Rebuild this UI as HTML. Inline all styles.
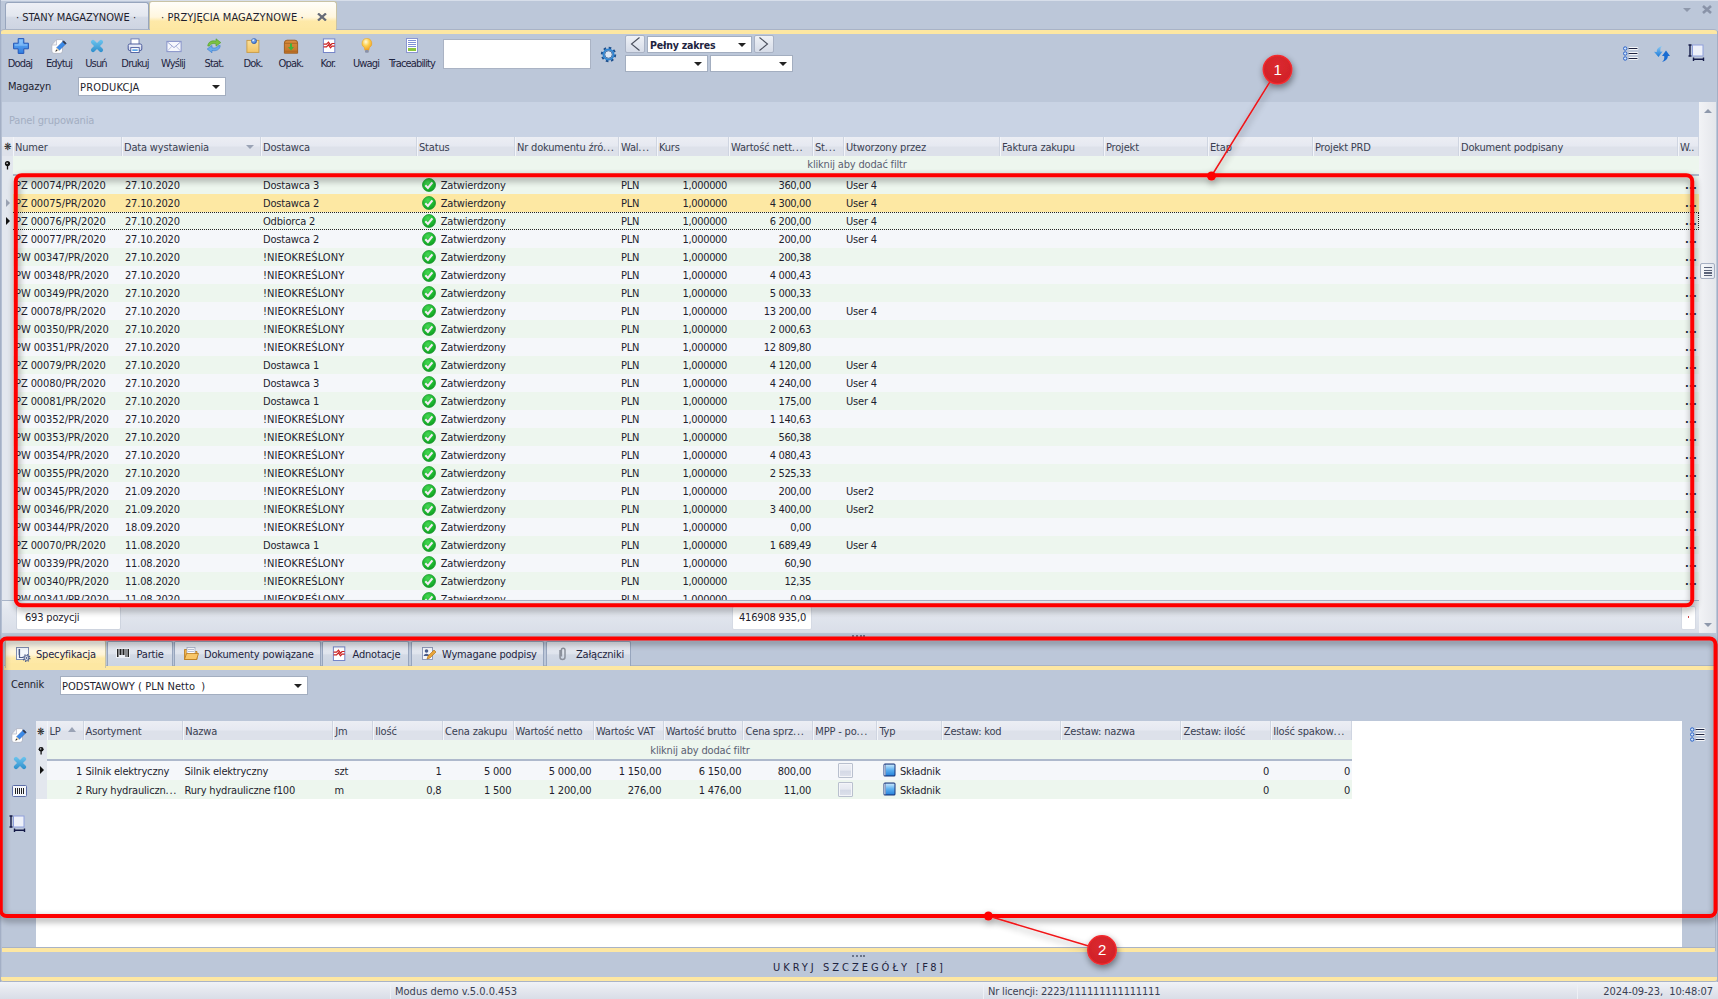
<!DOCTYPE html><html lang="pl"><head><meta charset="utf-8"><title>Przyjęcia magazynowe</title><style>
*{box-sizing:border-box;margin:0;padding:0}
html,body{width:1718px;height:999px;overflow:hidden;background:#bcc7d9}
body{font-family:"DejaVu Sans Condensed","Liberation Sans",sans-serif;font-size:11px;color:#1e1e2e;position:relative;letter-spacing:-0.18px}
.uc{letter-spacing:0.05px}
.num{letter-spacing:-0.35px}
.el{font-style:normal;letter-spacing:0.7px}
.abs{position:absolute}
.t{position:absolute;white-space:nowrap;line-height:14px;height:15px;padding-top:1px}
.hdr{position:absolute;top:137px;height:19px;background:linear-gradient(#eceef4 0,#e6e9f1 45%,#dde1ea 55%,#dde1ea 100%);border-left:1px solid #f3f5f9;border-right:1px solid #cfd5e1;color:#3a3f52}
.hdr span,.dh span{position:absolute;left:1px;top:4px;line-height:14px;white-space:nowrap}
.dh{position:absolute;top:721px;height:19px;background:linear-gradient(#eceef4 0,#e6e9f1 45%,#dde1ea 55%,#dde1ea 100%);border-left:1px solid #f3f5f9;border-right:1px solid #cfd5e1;color:#3a3f52}
.row{position:absolute;left:13px;width:1686px;height:18px}
.row .t{top:2px}
.g{background:#edf6ee}
.w{background:#f5f7fa}
.sel{background:#fde8a3}
.combo{position:absolute;background:#fff;border:1px solid #a3aec0;}
.arr{position:absolute;width:0;height:0;border-left:4px solid transparent;border-right:4px solid transparent;border-top:4px solid #222}
.tbl{position:absolute;top:58px;line-height:12px;font-size:11px;letter-spacing:-0.85px;color:#1e2440;white-space:nowrap;text-align:center}
.ic{position:absolute}
</style></head><body>
<div class="abs" style="left:0;top:0;width:1718px;height:1px;background:#d7deea"></div>
<div class="abs" style="left:0;top:0;width:1px;height:982px;background:#a3afc5"></div><div class="abs" style="left:1px;top:34px;width:1px;height:948px;background:#b4bfd2"></div>
<div class="abs" style="left:5px;top:2px;width:144px;height:28px;border:1px solid #97a5bd;border-bottom:none;border-radius:3px 3px 0 0;background:linear-gradient(#eef0f6 0,#e3e7ef 48%,#d4dae6 54%,#cdd4e2 100%)"></div>
<div class="t" style="left:16px;top:10px;font-size:11px;letter-spacing:-0.05px">· STANY MAGAZYNOWE ·</div>
<div class="abs" style="left:149px;top:1px;width:188px;height:30px;border:1px solid #c9c3a5;border-bottom:none;border-radius:3px 3px 0 0;background:linear-gradient(#fffefa 0,#fff6de 52%,#fee9a8 66%,#fde7a2 100%)"></div>
<div class="t" style="left:161px;top:10px;font-size:11px;letter-spacing:0.08px">· PRZYJĘCIA MAGAZYNOWE ·</div>
<svg class="ic" style="left:316.500px;top:12.500px" width="10" height="8" viewBox="0 0 10 8"><path d="M1 0.500L9 7.500M9 0.500L1 7.500" stroke="#666b78" stroke-width="2.300"/></svg>
<div class="abs" style="left:1px;top:29px;width:1716px;height:5px;background:#fde7a2;border-top:1px solid #a9b3c6;border-radius:3px 3px 0 0"></div>
<div class="abs" style="left:150px;top:28px;width:186px;height:4px;background:#fde7a2"></div>
<div class="abs" style="left:1683px;top:8px;width:0;height:0;border-left:4px solid transparent;border-right:4px solid transparent;border-top:4px solid #8e98ab"></div>
<svg class="ic" style="left:1702px;top:5px" width="10" height="9" viewBox="0 0 10 9"><path d="M1 1L9 8M9 1L1 8" stroke="#8993a8" stroke-width="2.600"/></svg>
<svg width="0" height="0" style="position:absolute"><defs><linearGradient id="gAdd" x1="0" y1="0" x2="0" y2="1"><stop offset="0" stop-color="#6db3f7"/><stop offset="1" stop-color="#2f7de0"/></linearGradient><linearGradient id="gDel" gradientUnits="userSpaceOnUse" x1="0" y1="2" x2="0" y2="14"><stop offset="0" stop-color="#6cc4ee"/><stop offset="1" stop-color="#2f8fcc"/></linearGradient><linearGradient id="gPr" x1="0" y1="0" x2="0" y2="1"><stop offset="0" stop-color="#f2f4fb"/><stop offset="1" stop-color="#c8d0ea"/></linearGradient><linearGradient id="gDok" x1="0" y1="0" x2="0" y2="1"><stop offset="0" stop-color="#fbe09a"/><stop offset="1" stop-color="#f2c465"/></linearGradient><radialGradient id="gPin" cx="0.35" cy="0.3" r="0.8"><stop offset="0" stop-color="#a8d0ff"/><stop offset="1" stop-color="#2a62c8"/></radialGradient><linearGradient id="gOp" x1="0" y1="0" x2="0" y2="1"><stop offset="0" stop-color="#d98c3c"/><stop offset="1" stop-color="#c47428"/></linearGradient><radialGradient id="gBulb" cx="0.4" cy="0.3" r="0.75"><stop offset="0" stop-color="#fffbe0"/><stop offset="0.45" stop-color="#fdd050"/><stop offset="1" stop-color="#f09a1c"/></radialGradient><radialGradient id="gChk" cx="0.42" cy="0.3" r="0.75"><stop offset="0" stop-color="#46d654"/><stop offset="0.6" stop-color="#1db82f"/><stop offset="1" stop-color="#109a22"/></radialGradient><linearGradient id="gBook" x1="0" y1="0" x2="0" y2="1"><stop offset="0" stop-color="#c6e6fb"/><stop offset="0.5" stop-color="#5cb0f0"/><stop offset="1" stop-color="#2a84dc"/></linearGradient></defs></svg>
<svg class="ic" style="left:12.75px;top:38px" width="16" height="16" viewBox="0 0 16 16"><path d="M5.200 0.600h5.600v4.600h4.600v5.600h-4.600v4.600h-5.600v-4.600h-4.600v-5.600h4.600z" fill="url(#gAdd)" stroke="#2457b8" stroke-width="1" stroke-linejoin="round"/><path d="M6.200 1.700h3.600v4.500h4.500v1.600h-12.600v-1.600h4.500z" fill="#9fd0ff" opacity="0.55"/></svg>
<div class="tbl" style="left:-20px;width:80px">Dodaj</div>
<svg class="ic" style="left:51px;top:38px" width="16" height="16" viewBox="0 0 16 16"><path d="M0.800 7L5.500 1.600H11.500V13Q11.500 15.400 9 15.400H3Q0.800 15.400 0.800 13Z" fill="#ffffff" stroke="#b0b5c4" stroke-width="0.900"/><path d="M0.800 7H5.500V1.600Z" fill="#f3f4f8" stroke="#b0b5c4" stroke-width="0.700" stroke-linejoin="round"/><polygon points="12.700,2.700 15.300,5.300 8.300,12.300 5.700,9.700" fill="#3a8ae8" stroke="#2560b8" stroke-width="0.600"/><polygon points="12.700,2.700 15.300,5.300 14.200,6.400 11.600,3.800" fill="#3a3a44"/><polygon points="5.700,9.700 8.300,12.300 4.300,13.700" fill="#ead9b6"/><polygon points="5.200,11.500 6.500,12.800 4.300,13.700" fill="#30303a"/></svg>
<div class="tbl" style="left:19px;width:80px">Edytuj</div>
<svg class="ic" style="left:89px;top:38px" width="16" height="16" viewBox="0 0 16 16"><path d="M4 4L12 12M12 4L4 12" stroke="url(#gDel)" stroke-width="4.200" stroke-linecap="round"/></svg>
<div class="tbl" style="left:56px;width:80px">Usuń</div>
<svg class="ic" style="left:127px;top:38px" width="16" height="16" viewBox="0 0 16 16"><rect x="4" y="0.900" width="8" height="6" fill="#ffffff" stroke="#6a78b0" stroke-width="0.900"/><rect x="1.200" y="6" width="13.600" height="6.600" rx="1.600" fill="url(#gPr)" stroke="#4a5a9c" stroke-width="1"/><rect x="3.800" y="9.600" width="8.400" height="4.900" fill="#ffffff" stroke="#4a5a9c" stroke-width="0.900"/><rect x="5.300" y="11.300" width="5.400" height="1.700" fill="#5aa6ea"/></svg>
<div class="tbl" style="left:95px;width:80px">Drukuj</div>
<svg class="ic" style="left:165.5px;top:38px" width="16" height="16" viewBox="0 0 16 16"><rect x="0.900" y="3.400" width="14.200" height="10.200" fill="#f6f8fd" stroke="#8792c8" stroke-width="1"/><path d="M1.200 3.800L8 9.600L14.800 3.800" fill="none" stroke="#8f9acc" stroke-width="0.900"/><path d="M1.200 13.200L6 8.200M14.800 13.200L10 8.200" fill="none" stroke="#aab2d8" stroke-width="0.800"/></svg>
<div class="tbl" style="left:133px;width:80px">Wyślij</div>
<svg class="ic" style="left:205.5px;top:38px" width="16" height="16" viewBox="0 0 16 16"><path d="M1.800 8C2 4 6 2 10 3.200L10 0.800L14.800 4.600L10 8.200L10 5.800C7 5.100 4.500 5.700 3.600 8Z" fill="#7cc242" stroke="#4a9a28" stroke-width="0.600"/><path transform="rotate(180 8 7.800)" d="M1.800 8C2 4 6 2 10 3.200L10 0.800L14.800 4.600L10 8.200L10 5.800C7 5.100 4.500 5.700 3.600 8Z" fill="#6aabec" stroke="#3a7acc" stroke-width="0.600"/></svg>
<div class="tbl" style="left:174px;width:80px">Stat.</div>
<svg class="ic" style="left:244.5px;top:38px" width="16" height="16" viewBox="0 0 16 16"><rect x="1.900" y="2.400" width="12" height="12" fill="url(#gDok)" stroke="#c99a44" stroke-width="0.900"/><circle cx="9" cy="3.100" r="2.600" fill="url(#gPin)" stroke="#1e4aa0" stroke-width="0.500"/><circle cx="8.200" cy="2.300" r="0.800" fill="#fff" opacity="0.9"/></svg>
<div class="tbl" style="left:213px;width:80px">Dok.</div>
<svg class="ic" style="left:283px;top:38px" width="16" height="16" viewBox="0 0 16 16"><path d="M1.400 5Q1.400 2.200 4 2.200H12Q14.600 2.200 14.600 5V15.200H1.400Z" fill="url(#gOp)" stroke="#9a5a1c" stroke-width="0.900"/><path d="M1.400 5.300H14.600M1.400 13.200H14.600" stroke="#a4621f" stroke-width="0.800"/><path d="M8 5.600V10" stroke="#3cb43c" stroke-width="2"/><path d="M5 9H11L8 12.600Z" fill="#3cb43c"/></svg>
<div class="tbl" style="left:251px;width:80px">Opak.</div>
<svg class="ic" style="left:321px;top:38px" width="16" height="16" viewBox="0 0 16 16"><rect x="2.400" y="0.900" width="11.400" height="13.600" fill="#ffffff" stroke="#7585c8" stroke-width="1"/><path d="M2.500 6.200H5.500L7.500 4.200L9.500 7.200L11 5.500H13.700M2.500 8.800H5.500L7.500 6.800L9.500 9.800L11 8.100H13.700" fill="none" stroke="#cc2222" stroke-width="1.200"/></svg>
<div class="tbl" style="left:288px;width:80px">Kor.</div>
<svg class="ic" style="left:359px;top:38px" width="16" height="16" viewBox="0 0 16 16"><path d="M7.900 0.300a5 5 0 0 0-2.700 9.200Q5.800 11 5.800 12.200H10Q10 11 10.600 9.500A5 5 0 0 0 7.900 0.300Z" fill="url(#gBulb)" stroke="#e0a030" stroke-width="0.500"/><rect x="6" y="12" width="3.800" height="2.800" rx="1" fill="#8a92a8"/></svg>
<div class="tbl" style="left:326px;width:80px">Uwagi</div>
<svg class="ic" style="left:404px;top:38px" width="16" height="16" viewBox="0 0 16 16"><rect x="2.500" y="0.500" width="11" height="14" fill="#ffffff" stroke="#8a96d0" stroke-width="1"/><path d="M4 2.500h8M4 4.500h8M4 6.500h8M4 8.500h8" stroke="#7f90d4" stroke-width="1"/><rect x="4" y="10" width="8" height="3" fill="#8cc63f"/></svg>
<div class="tbl" style="left:372px;width:80px">Traceability</div>
<div class="combo" style="left:443px;top:39px;width:148px;height:30px;border-color:#aab3c4"></div>
<svg class="ic" style="left:599.500px;top:45.500px" width="17" height="17" viewBox="0 0 17 17"><circle cx="8.500" cy="8.500" r="6.700" fill="none" stroke="#1d4f8c" stroke-width="2" stroke-dasharray="2.630 2.630"/><circle cx="8.500" cy="8.500" r="5" fill="none" stroke="#2f86d4" stroke-width="2"/><circle cx="8.500" cy="8.500" r="3.700" fill="#dfe8f4" stroke="#1d4f8c" stroke-width="0.700"/></svg>
<div class="abs" style="left:625px;top:35px;width:20px;height:18px;border:1px solid #a9b2c4;border-radius:2px;background:linear-gradient(#eef1f6,#d6dce8)"></div>
<svg class="ic" style="left:629px;top:37px" width="12" height="14" viewBox="0 0 12 14"><path d="M10.500 0.500L2.500 7l8 6.500" fill="none" stroke="#4a4f5c" stroke-width="1.100"/></svg>
<div class="combo" style="left:647px;top:36px;width:105px;height:17px"></div>
<div class="t" style="left:650px;top:37px;font-weight:bold;font-size:10.500px;letter-spacing:-0.2px;color:#1e2440">Pełny zakres</div>
<div class="arr" style="left:738px;top:43px"></div>
<div class="abs" style="left:754px;top:35px;width:20px;height:18px;border:1px solid #a9b2c4;border-radius:2px;background:linear-gradient(#eef1f6,#d6dce8)"></div>
<svg class="ic" style="left:758px;top:37px" width="12" height="14" viewBox="0 0 12 14"><path d="M1.500 0.500L9.500 7l-8 6.500" fill="none" stroke="#4a4f5c" stroke-width="1.100"/></svg>
<div class="combo" style="left:625px;top:55px;width:83px;height:17px"></div><div class="arr" style="left:694px;top:62px"></div>
<div class="combo" style="left:710px;top:55px;width:83px;height:17px"></div><div class="arr" style="left:779px;top:62px"></div>
<svg class="ic" style="left:1623px;top:46px" width="16" height="15" viewBox="0 0 16 15"><path d="M7 2.500h7M7 7.500h7M7 12.500h7" stroke="#ffffff" stroke-width="2.800" stroke-linecap="round" opacity="0.85"/><path d="M6 2.500h8M6 7.500h8M6 12.500h8" stroke="#1e2440" stroke-width="1.200" stroke-linecap="round"/><circle cx="2.200" cy="2.5" r="1.700" fill="#cfe4fb" stroke="#2b62c8" stroke-width="1"/><circle cx="2.200" cy="7.5" r="1.700" fill="#cfe4fb" stroke="#2b62c8" stroke-width="1"/><circle cx="2.200" cy="12.5" r="1.700" fill="#cfe4fb" stroke="#2b62c8" stroke-width="1"/></svg>
<svg class="ic" style="left:1653px;top:45px" width="18" height="18" viewBox="0 0 18 18"><defs><linearGradient id="gRf" x1="0" y1="0" x2="0" y2="1"><stop offset="0" stop-color="#8ccaf4"/><stop offset="1" stop-color="#1878d8"/></linearGradient></defs><path d="M9 1C5 2 3.500 4.500 3.800 7L1 6.800L5.500 12L9.600 6.600L7.500 6.800C7 4.500 7.500 2.500 9 1Z" fill="url(#gRf)"/><path d="M9 11L13 5.500L17 11L14.800 11C15 13.500 13 16 9 17C11 15.500 11.500 13.500 11.200 11Z" fill="#1a6cd2"/></svg>
<svg class="ic" style="left:1688px;top:43.8px" width="17" height="18" viewBox="0 0 17 18"><rect x="4.500" y="1" width="10.500" height="11" fill="#eef1fa" stroke="#8fa0dc" stroke-width="1"/><path d="M2 1V12M0.500 1h3M0.500 12h3M5.500 15.300H15.500M5.500 13.500v3.600M15.500 13.500v3.600" stroke="#141a48" stroke-width="1.400" fill="none"/></svg>
<div class="t" style="left:8px;top:79px;font-size:11px">Magazyn</div>
<div class="combo" style="left:78px;top:77px;width:148px;height:19px"></div>
<div class="t uc" style="left:80px;top:80px;letter-spacing:0.2px">PRODUKCJA</div><div class="arr" style="left:212px;top:85px"></div>
<div class="abs" style="left:2px;top:102px;width:1697px;height:36px;background:#c9d3e4;border-bottom:1px solid #a7b2c6"></div>
<div class="t" style="left:9px;top:113px;color:#a3aec2;font-size:11px">Panel grupowania</div>
<div class="abs" style="left:1699px;top:102px;width:17px;height:531px;background:linear-gradient(90deg,#f2f3f6,#e4e6eb)"></div>
<div class="abs" style="left:1704px;top:109px;width:0;height:0;border-left:4px solid transparent;border-right:4px solid transparent;border-bottom:4px solid #8e98ab"></div>
<div class="abs" style="left:1704px;top:623px;width:0;height:0;border-left:4px solid transparent;border-right:4px solid transparent;border-top:4px solid #8e98ab"></div>
<div class="abs" style="left:1700px;top:263px;width:15px;height:16px;border:1px solid #a7b0c3;border-radius:2px;background:linear-gradient(90deg,#f8f9fb,#e3e7ef)"></div>
<div class="abs" style="left:1703.500px;top:266.500px;width:8px;height:9.500px;background:repeating-linear-gradient(#5a6278 0,#5a6278 1.500px,transparent 1.500px,transparent 2.600px)"></div>
<div class="hdr" style="left:2px;width:11px;border:none"></div>
<div class="t" style="left:4px;top:139px;font-size:10px;color:#222">❋</div>
<div class="hdr" style="left:13px;width:109px"><span>Numer</span></div>
<div class="hdr" style="left:122px;width:139px"><span>Data wystawienia</span></div>
<div class="hdr" style="left:261px;width:156px"><span>Dostawca</span></div>
<div class="hdr" style="left:417px;width:98px"><span>Status</span></div>
<div class="hdr" style="left:515px;width:104px"><span>Nr dokumentu źró<i class="el">...</i></span></div>
<div class="hdr" style="left:619px;width:38px"><span>Wal<i class="el">...</i></span></div>
<div class="hdr" style="left:657px;width:72px"><span>Kurs</span></div>
<div class="hdr" style="left:729px;width:84px"><span>Wartość nett<i class="el">...</i></span></div>
<div class="hdr" style="left:813px;width:31px"><span>St<i class="el">...</i></span></div>
<div class="hdr" style="left:844px;width:156px"><span>Utworzony przez</span></div>
<div class="hdr" style="left:1000px;width:104px"><span>Faktura zakupu</span></div>
<div class="hdr" style="left:1104px;width:104px"><span>Projekt</span></div>
<div class="hdr" style="left:1208px;width:105px"><span>Etap</span></div>
<div class="hdr" style="left:1313px;width:146px"><span>Projekt PRD</span></div>
<div class="hdr" style="left:1459px;width:219px"><span>Dokument podpisany</span></div>
<div class="hdr" style="left:1678px;width:21px"><span>W..</span></div>
<div class="abs" style="left:246px;top:145px;width:0;height:0;border-left:4px solid transparent;border-right:4px solid transparent;border-top:4px solid #9aa3b5"></div>
<div class="abs" style="left:2px;top:156px;width:11px;height:20px;background:#e3e7ee"></div>
<div class="abs" style="left:13px;top:156px;width:1686px;height:18px;background:#edf6ee"></div>
<div class="abs" style="left:13px;top:174px;width:1686px;height:2px;background:#aeb9cc"></div>
<svg class="ic" style="left:4px;top:161px" width="7" height="9" viewBox="0 0 7 9"><circle cx="3.500" cy="2.600" r="2.600" fill="#111"/><circle cx="3.100" cy="2.200" r="0.800" fill="#fff"/><path d="M3.500 4v4.500" stroke="#111" stroke-width="1.300"/></svg>
<div class="t" style="left:807px;top:157px;color:#5a6072;width:100px;text-align:center">kliknij aby dodać filtr</div>
<div class="abs" style="left:2px;top:176px;width:11px;height:424px;background:#e3e7ee"></div>
<div class="abs" style="left:3px;top:176px;width:1696px;height:424px;overflow:hidden">
<div class="row g" style="left:10px;top:0px">
<div class="t" style="left:2px;letter-spacing:-0.08px">PZ 00074/PR/2020</div><div class="t" style="left:112px">27.10.2020</div><div class="t" style="left:250px">Dostawca 3</div><svg class="ic" style="left:409px;top:1.700px" width="14" height="14" viewBox="0 0 14 14"><circle cx="7" cy="7" r="6.500" fill="url(#gChk)" stroke="#0f8f22" stroke-width="0.700"/><path d="M3.300 7.300l2.600 2.700 4.500-5.700" fill="none" stroke="#f6ecf6" stroke-width="2.100"/></svg><div class="t" style="left:427.700px">Zatwierdzony</div><div class="t" style="left:608px">PLN</div><div class="t num" style="left:644px;width:70px;text-align:right">1,000000</div><div class="t num" style="left:718px;width:80px;text-align:right">360,00</div>
<div class="t" style="left:833px">User 4</div>
<div class="t" style="left:1672px;top:2px;font-weight:bold;letter-spacing:0.250px;color:#1a1f3a">...</div>
</div>
<div class="row sel" style="left:10px;top:18px">
<div class="t" style="left:2px;letter-spacing:-0.08px">PZ 00075/PR/2020</div><div class="t" style="left:112px">27.10.2020</div><div class="t" style="left:250px">Dostawca 2</div><svg class="ic" style="left:409px;top:1.700px" width="14" height="14" viewBox="0 0 14 14"><circle cx="7" cy="7" r="6.500" fill="url(#gChk)" stroke="#0f8f22" stroke-width="0.700"/><path d="M3.300 7.300l2.600 2.700 4.500-5.700" fill="none" stroke="#f6ecf6" stroke-width="2.100"/></svg><div class="t" style="left:427.700px">Zatwierdzony</div><div class="t" style="left:608px">PLN</div><div class="t num" style="left:644px;width:70px;text-align:right">1,000000</div><div class="t num" style="left:718px;width:80px;text-align:right">4 300,00</div>
<div class="t" style="left:833px">User 4</div>
<div class="t" style="left:1672px;top:2px;font-weight:bold;letter-spacing:0.250px;color:#1a1f3a">...</div>
</div>
<div class="row g" style="left:10px;top:36px">
<div class="t" style="left:2px;letter-spacing:-0.08px">PZ 00076/PR/2020</div><div class="t" style="left:112px">27.10.2020</div><div class="t" style="left:250px">Odbiorca 2</div><svg class="ic" style="left:409px;top:1.700px" width="14" height="14" viewBox="0 0 14 14"><circle cx="7" cy="7" r="6.500" fill="url(#gChk)" stroke="#0f8f22" stroke-width="0.700"/><path d="M3.300 7.300l2.600 2.700 4.500-5.700" fill="none" stroke="#f6ecf6" stroke-width="2.100"/></svg><div class="t" style="left:427.700px">Zatwierdzony</div><div class="t" style="left:608px">PLN</div><div class="t num" style="left:644px;width:70px;text-align:right">1,000000</div><div class="t num" style="left:718px;width:80px;text-align:right">6 200,00</div>
<div class="t" style="left:833px">User 4</div>
<div class="t" style="left:1672px;top:2px;font-weight:bold;letter-spacing:0.250px;color:#1a1f3a">...</div>
</div>
<div class="row w" style="left:10px;top:54px">
<div class="t" style="left:2px;letter-spacing:-0.08px">PZ 00077/PR/2020</div><div class="t" style="left:112px">27.10.2020</div><div class="t" style="left:250px">Dostawca 2</div><svg class="ic" style="left:409px;top:1.700px" width="14" height="14" viewBox="0 0 14 14"><circle cx="7" cy="7" r="6.500" fill="url(#gChk)" stroke="#0f8f22" stroke-width="0.700"/><path d="M3.300 7.300l2.600 2.700 4.500-5.700" fill="none" stroke="#f6ecf6" stroke-width="2.100"/></svg><div class="t" style="left:427.700px">Zatwierdzony</div><div class="t" style="left:608px">PLN</div><div class="t num" style="left:644px;width:70px;text-align:right">1,000000</div><div class="t num" style="left:718px;width:80px;text-align:right">200,00</div>
<div class="t" style="left:833px">User 4</div>
<div class="t" style="left:1672px;top:2px;font-weight:bold;letter-spacing:0.250px;color:#1a1f3a">...</div>
</div>
<div class="row g" style="left:10px;top:72px">
<div class="t" style="left:2px;letter-spacing:-0.08px">PW 00347/PR/2020</div><div class="t" style="left:112px">27.10.2020</div><div class="t uc" style="left:250px">!NIEOKREŚLONY</div><svg class="ic" style="left:409px;top:1.700px" width="14" height="14" viewBox="0 0 14 14"><circle cx="7" cy="7" r="6.500" fill="url(#gChk)" stroke="#0f8f22" stroke-width="0.700"/><path d="M3.300 7.300l2.600 2.700 4.500-5.700" fill="none" stroke="#f6ecf6" stroke-width="2.100"/></svg><div class="t" style="left:427.700px">Zatwierdzony</div><div class="t" style="left:608px">PLN</div><div class="t num" style="left:644px;width:70px;text-align:right">1,000000</div><div class="t num" style="left:718px;width:80px;text-align:right">200,38</div>
<div class="t" style="left:1672px;top:2px;font-weight:bold;letter-spacing:0.250px;color:#1a1f3a">...</div>
</div>
<div class="row w" style="left:10px;top:90px">
<div class="t" style="left:2px;letter-spacing:-0.08px">PW 00348/PR/2020</div><div class="t" style="left:112px">27.10.2020</div><div class="t uc" style="left:250px">!NIEOKREŚLONY</div><svg class="ic" style="left:409px;top:1.700px" width="14" height="14" viewBox="0 0 14 14"><circle cx="7" cy="7" r="6.500" fill="url(#gChk)" stroke="#0f8f22" stroke-width="0.700"/><path d="M3.300 7.300l2.600 2.700 4.500-5.700" fill="none" stroke="#f6ecf6" stroke-width="2.100"/></svg><div class="t" style="left:427.700px">Zatwierdzony</div><div class="t" style="left:608px">PLN</div><div class="t num" style="left:644px;width:70px;text-align:right">1,000000</div><div class="t num" style="left:718px;width:80px;text-align:right">4 000,43</div>
<div class="t" style="left:1672px;top:2px;font-weight:bold;letter-spacing:0.250px;color:#1a1f3a">...</div>
</div>
<div class="row g" style="left:10px;top:108px">
<div class="t" style="left:2px;letter-spacing:-0.08px">PW 00349/PR/2020</div><div class="t" style="left:112px">27.10.2020</div><div class="t uc" style="left:250px">!NIEOKREŚLONY</div><svg class="ic" style="left:409px;top:1.700px" width="14" height="14" viewBox="0 0 14 14"><circle cx="7" cy="7" r="6.500" fill="url(#gChk)" stroke="#0f8f22" stroke-width="0.700"/><path d="M3.300 7.300l2.600 2.700 4.500-5.700" fill="none" stroke="#f6ecf6" stroke-width="2.100"/></svg><div class="t" style="left:427.700px">Zatwierdzony</div><div class="t" style="left:608px">PLN</div><div class="t num" style="left:644px;width:70px;text-align:right">1,000000</div><div class="t num" style="left:718px;width:80px;text-align:right">5 000,33</div>
<div class="t" style="left:1672px;top:2px;font-weight:bold;letter-spacing:0.250px;color:#1a1f3a">...</div>
</div>
<div class="row w" style="left:10px;top:126px">
<div class="t" style="left:2px;letter-spacing:-0.08px">PZ 00078/PR/2020</div><div class="t" style="left:112px">27.10.2020</div><div class="t uc" style="left:250px">!NIEOKREŚLONY</div><svg class="ic" style="left:409px;top:1.700px" width="14" height="14" viewBox="0 0 14 14"><circle cx="7" cy="7" r="6.500" fill="url(#gChk)" stroke="#0f8f22" stroke-width="0.700"/><path d="M3.300 7.300l2.600 2.700 4.500-5.700" fill="none" stroke="#f6ecf6" stroke-width="2.100"/></svg><div class="t" style="left:427.700px">Zatwierdzony</div><div class="t" style="left:608px">PLN</div><div class="t num" style="left:644px;width:70px;text-align:right">1,000000</div><div class="t num" style="left:718px;width:80px;text-align:right">13 200,00</div>
<div class="t" style="left:833px">User 4</div>
<div class="t" style="left:1672px;top:2px;font-weight:bold;letter-spacing:0.250px;color:#1a1f3a">...</div>
</div>
<div class="row g" style="left:10px;top:144px">
<div class="t" style="left:2px;letter-spacing:-0.08px">PW 00350/PR/2020</div><div class="t" style="left:112px">27.10.2020</div><div class="t uc" style="left:250px">!NIEOKREŚLONY</div><svg class="ic" style="left:409px;top:1.700px" width="14" height="14" viewBox="0 0 14 14"><circle cx="7" cy="7" r="6.500" fill="url(#gChk)" stroke="#0f8f22" stroke-width="0.700"/><path d="M3.300 7.300l2.600 2.700 4.500-5.700" fill="none" stroke="#f6ecf6" stroke-width="2.100"/></svg><div class="t" style="left:427.700px">Zatwierdzony</div><div class="t" style="left:608px">PLN</div><div class="t num" style="left:644px;width:70px;text-align:right">1,000000</div><div class="t num" style="left:718px;width:80px;text-align:right">2 000,63</div>
<div class="t" style="left:1672px;top:2px;font-weight:bold;letter-spacing:0.250px;color:#1a1f3a">...</div>
</div>
<div class="row w" style="left:10px;top:162px">
<div class="t" style="left:2px;letter-spacing:-0.08px">PW 00351/PR/2020</div><div class="t" style="left:112px">27.10.2020</div><div class="t uc" style="left:250px">!NIEOKREŚLONY</div><svg class="ic" style="left:409px;top:1.700px" width="14" height="14" viewBox="0 0 14 14"><circle cx="7" cy="7" r="6.500" fill="url(#gChk)" stroke="#0f8f22" stroke-width="0.700"/><path d="M3.300 7.300l2.600 2.700 4.500-5.700" fill="none" stroke="#f6ecf6" stroke-width="2.100"/></svg><div class="t" style="left:427.700px">Zatwierdzony</div><div class="t" style="left:608px">PLN</div><div class="t num" style="left:644px;width:70px;text-align:right">1,000000</div><div class="t num" style="left:718px;width:80px;text-align:right">12 809,80</div>
<div class="t" style="left:1672px;top:2px;font-weight:bold;letter-spacing:0.250px;color:#1a1f3a">...</div>
</div>
<div class="row g" style="left:10px;top:180px">
<div class="t" style="left:2px;letter-spacing:-0.08px">PZ 00079/PR/2020</div><div class="t" style="left:112px">27.10.2020</div><div class="t" style="left:250px">Dostawca 1</div><svg class="ic" style="left:409px;top:1.700px" width="14" height="14" viewBox="0 0 14 14"><circle cx="7" cy="7" r="6.500" fill="url(#gChk)" stroke="#0f8f22" stroke-width="0.700"/><path d="M3.300 7.300l2.600 2.700 4.500-5.700" fill="none" stroke="#f6ecf6" stroke-width="2.100"/></svg><div class="t" style="left:427.700px">Zatwierdzony</div><div class="t" style="left:608px">PLN</div><div class="t num" style="left:644px;width:70px;text-align:right">1,000000</div><div class="t num" style="left:718px;width:80px;text-align:right">4 120,00</div>
<div class="t" style="left:833px">User 4</div>
<div class="t" style="left:1672px;top:2px;font-weight:bold;letter-spacing:0.250px;color:#1a1f3a">...</div>
</div>
<div class="row w" style="left:10px;top:198px">
<div class="t" style="left:2px;letter-spacing:-0.08px">PZ 00080/PR/2020</div><div class="t" style="left:112px">27.10.2020</div><div class="t" style="left:250px">Dostawca 3</div><svg class="ic" style="left:409px;top:1.700px" width="14" height="14" viewBox="0 0 14 14"><circle cx="7" cy="7" r="6.500" fill="url(#gChk)" stroke="#0f8f22" stroke-width="0.700"/><path d="M3.300 7.300l2.600 2.700 4.500-5.700" fill="none" stroke="#f6ecf6" stroke-width="2.100"/></svg><div class="t" style="left:427.700px">Zatwierdzony</div><div class="t" style="left:608px">PLN</div><div class="t num" style="left:644px;width:70px;text-align:right">1,000000</div><div class="t num" style="left:718px;width:80px;text-align:right">4 240,00</div>
<div class="t" style="left:833px">User 4</div>
<div class="t" style="left:1672px;top:2px;font-weight:bold;letter-spacing:0.250px;color:#1a1f3a">...</div>
</div>
<div class="row g" style="left:10px;top:216px">
<div class="t" style="left:2px;letter-spacing:-0.08px">PZ 00081/PR/2020</div><div class="t" style="left:112px">27.10.2020</div><div class="t" style="left:250px">Dostawca 1</div><svg class="ic" style="left:409px;top:1.700px" width="14" height="14" viewBox="0 0 14 14"><circle cx="7" cy="7" r="6.500" fill="url(#gChk)" stroke="#0f8f22" stroke-width="0.700"/><path d="M3.300 7.300l2.600 2.700 4.500-5.700" fill="none" stroke="#f6ecf6" stroke-width="2.100"/></svg><div class="t" style="left:427.700px">Zatwierdzony</div><div class="t" style="left:608px">PLN</div><div class="t num" style="left:644px;width:70px;text-align:right">1,000000</div><div class="t num" style="left:718px;width:80px;text-align:right">175,00</div>
<div class="t" style="left:833px">User 4</div>
<div class="t" style="left:1672px;top:2px;font-weight:bold;letter-spacing:0.250px;color:#1a1f3a">...</div>
</div>
<div class="row w" style="left:10px;top:234px">
<div class="t" style="left:2px;letter-spacing:-0.08px">PW 00352/PR/2020</div><div class="t" style="left:112px">27.10.2020</div><div class="t uc" style="left:250px">!NIEOKREŚLONY</div><svg class="ic" style="left:409px;top:1.700px" width="14" height="14" viewBox="0 0 14 14"><circle cx="7" cy="7" r="6.500" fill="url(#gChk)" stroke="#0f8f22" stroke-width="0.700"/><path d="M3.300 7.300l2.600 2.700 4.500-5.700" fill="none" stroke="#f6ecf6" stroke-width="2.100"/></svg><div class="t" style="left:427.700px">Zatwierdzony</div><div class="t" style="left:608px">PLN</div><div class="t num" style="left:644px;width:70px;text-align:right">1,000000</div><div class="t num" style="left:718px;width:80px;text-align:right">1 140,63</div>
<div class="t" style="left:1672px;top:2px;font-weight:bold;letter-spacing:0.250px;color:#1a1f3a">...</div>
</div>
<div class="row g" style="left:10px;top:252px">
<div class="t" style="left:2px;letter-spacing:-0.08px">PW 00353/PR/2020</div><div class="t" style="left:112px">27.10.2020</div><div class="t uc" style="left:250px">!NIEOKREŚLONY</div><svg class="ic" style="left:409px;top:1.700px" width="14" height="14" viewBox="0 0 14 14"><circle cx="7" cy="7" r="6.500" fill="url(#gChk)" stroke="#0f8f22" stroke-width="0.700"/><path d="M3.300 7.300l2.600 2.700 4.500-5.700" fill="none" stroke="#f6ecf6" stroke-width="2.100"/></svg><div class="t" style="left:427.700px">Zatwierdzony</div><div class="t" style="left:608px">PLN</div><div class="t num" style="left:644px;width:70px;text-align:right">1,000000</div><div class="t num" style="left:718px;width:80px;text-align:right">560,38</div>
<div class="t" style="left:1672px;top:2px;font-weight:bold;letter-spacing:0.250px;color:#1a1f3a">...</div>
</div>
<div class="row w" style="left:10px;top:270px">
<div class="t" style="left:2px;letter-spacing:-0.08px">PW 00354/PR/2020</div><div class="t" style="left:112px">27.10.2020</div><div class="t uc" style="left:250px">!NIEOKREŚLONY</div><svg class="ic" style="left:409px;top:1.700px" width="14" height="14" viewBox="0 0 14 14"><circle cx="7" cy="7" r="6.500" fill="url(#gChk)" stroke="#0f8f22" stroke-width="0.700"/><path d="M3.300 7.300l2.600 2.700 4.500-5.700" fill="none" stroke="#f6ecf6" stroke-width="2.100"/></svg><div class="t" style="left:427.700px">Zatwierdzony</div><div class="t" style="left:608px">PLN</div><div class="t num" style="left:644px;width:70px;text-align:right">1,000000</div><div class="t num" style="left:718px;width:80px;text-align:right">4 080,43</div>
<div class="t" style="left:1672px;top:2px;font-weight:bold;letter-spacing:0.250px;color:#1a1f3a">...</div>
</div>
<div class="row g" style="left:10px;top:288px">
<div class="t" style="left:2px;letter-spacing:-0.08px">PW 00355/PR/2020</div><div class="t" style="left:112px">27.10.2020</div><div class="t uc" style="left:250px">!NIEOKREŚLONY</div><svg class="ic" style="left:409px;top:1.700px" width="14" height="14" viewBox="0 0 14 14"><circle cx="7" cy="7" r="6.500" fill="url(#gChk)" stroke="#0f8f22" stroke-width="0.700"/><path d="M3.300 7.300l2.600 2.700 4.500-5.700" fill="none" stroke="#f6ecf6" stroke-width="2.100"/></svg><div class="t" style="left:427.700px">Zatwierdzony</div><div class="t" style="left:608px">PLN</div><div class="t num" style="left:644px;width:70px;text-align:right">1,000000</div><div class="t num" style="left:718px;width:80px;text-align:right">2 525,33</div>
<div class="t" style="left:1672px;top:2px;font-weight:bold;letter-spacing:0.250px;color:#1a1f3a">...</div>
</div>
<div class="row w" style="left:10px;top:306px">
<div class="t" style="left:2px;letter-spacing:-0.08px">PW 00345/PR/2020</div><div class="t" style="left:112px">21.09.2020</div><div class="t uc" style="left:250px">!NIEOKREŚLONY</div><svg class="ic" style="left:409px;top:1.700px" width="14" height="14" viewBox="0 0 14 14"><circle cx="7" cy="7" r="6.500" fill="url(#gChk)" stroke="#0f8f22" stroke-width="0.700"/><path d="M3.300 7.300l2.600 2.700 4.500-5.700" fill="none" stroke="#f6ecf6" stroke-width="2.100"/></svg><div class="t" style="left:427.700px">Zatwierdzony</div><div class="t" style="left:608px">PLN</div><div class="t num" style="left:644px;width:70px;text-align:right">1,000000</div><div class="t num" style="left:718px;width:80px;text-align:right">200,00</div>
<div class="t" style="left:833px">User2</div>
<div class="t" style="left:1672px;top:2px;font-weight:bold;letter-spacing:0.250px;color:#1a1f3a">...</div>
</div>
<div class="row g" style="left:10px;top:324px">
<div class="t" style="left:2px;letter-spacing:-0.08px">PW 00346/PR/2020</div><div class="t" style="left:112px">21.09.2020</div><div class="t uc" style="left:250px">!NIEOKREŚLONY</div><svg class="ic" style="left:409px;top:1.700px" width="14" height="14" viewBox="0 0 14 14"><circle cx="7" cy="7" r="6.500" fill="url(#gChk)" stroke="#0f8f22" stroke-width="0.700"/><path d="M3.300 7.300l2.600 2.700 4.500-5.700" fill="none" stroke="#f6ecf6" stroke-width="2.100"/></svg><div class="t" style="left:427.700px">Zatwierdzony</div><div class="t" style="left:608px">PLN</div><div class="t num" style="left:644px;width:70px;text-align:right">1,000000</div><div class="t num" style="left:718px;width:80px;text-align:right">3 400,00</div>
<div class="t" style="left:833px">User2</div>
<div class="t" style="left:1672px;top:2px;font-weight:bold;letter-spacing:0.250px;color:#1a1f3a">...</div>
</div>
<div class="row w" style="left:10px;top:342px">
<div class="t" style="left:2px;letter-spacing:-0.08px">PW 00344/PR/2020</div><div class="t" style="left:112px">18.09.2020</div><div class="t uc" style="left:250px">!NIEOKREŚLONY</div><svg class="ic" style="left:409px;top:1.700px" width="14" height="14" viewBox="0 0 14 14"><circle cx="7" cy="7" r="6.500" fill="url(#gChk)" stroke="#0f8f22" stroke-width="0.700"/><path d="M3.300 7.300l2.600 2.700 4.500-5.700" fill="none" stroke="#f6ecf6" stroke-width="2.100"/></svg><div class="t" style="left:427.700px">Zatwierdzony</div><div class="t" style="left:608px">PLN</div><div class="t num" style="left:644px;width:70px;text-align:right">1,000000</div><div class="t num" style="left:718px;width:80px;text-align:right">0,00</div>
<div class="t" style="left:1672px;top:2px;font-weight:bold;letter-spacing:0.250px;color:#1a1f3a">...</div>
</div>
<div class="row g" style="left:10px;top:360px">
<div class="t" style="left:2px;letter-spacing:-0.08px">PZ 00070/PR/2020</div><div class="t" style="left:112px">11.08.2020</div><div class="t" style="left:250px">Dostawca 1</div><svg class="ic" style="left:409px;top:1.700px" width="14" height="14" viewBox="0 0 14 14"><circle cx="7" cy="7" r="6.500" fill="url(#gChk)" stroke="#0f8f22" stroke-width="0.700"/><path d="M3.300 7.300l2.600 2.700 4.500-5.700" fill="none" stroke="#f6ecf6" stroke-width="2.100"/></svg><div class="t" style="left:427.700px">Zatwierdzony</div><div class="t" style="left:608px">PLN</div><div class="t num" style="left:644px;width:70px;text-align:right">1,000000</div><div class="t num" style="left:718px;width:80px;text-align:right">1 689,49</div>
<div class="t" style="left:833px">User 4</div>
<div class="t" style="left:1672px;top:2px;font-weight:bold;letter-spacing:0.250px;color:#1a1f3a">...</div>
</div>
<div class="row w" style="left:10px;top:378px">
<div class="t" style="left:2px;letter-spacing:-0.08px">PW 00339/PR/2020</div><div class="t" style="left:112px">11.08.2020</div><div class="t uc" style="left:250px">!NIEOKREŚLONY</div><svg class="ic" style="left:409px;top:1.700px" width="14" height="14" viewBox="0 0 14 14"><circle cx="7" cy="7" r="6.500" fill="url(#gChk)" stroke="#0f8f22" stroke-width="0.700"/><path d="M3.300 7.300l2.600 2.700 4.500-5.700" fill="none" stroke="#f6ecf6" stroke-width="2.100"/></svg><div class="t" style="left:427.700px">Zatwierdzony</div><div class="t" style="left:608px">PLN</div><div class="t num" style="left:644px;width:70px;text-align:right">1,000000</div><div class="t num" style="left:718px;width:80px;text-align:right">60,90</div>
<div class="t" style="left:1672px;top:2px;font-weight:bold;letter-spacing:0.250px;color:#1a1f3a">...</div>
</div>
<div class="row g" style="left:10px;top:396px">
<div class="t" style="left:2px;letter-spacing:-0.08px">PW 00340/PR/2020</div><div class="t" style="left:112px">11.08.2020</div><div class="t uc" style="left:250px">!NIEOKREŚLONY</div><svg class="ic" style="left:409px;top:1.700px" width="14" height="14" viewBox="0 0 14 14"><circle cx="7" cy="7" r="6.500" fill="url(#gChk)" stroke="#0f8f22" stroke-width="0.700"/><path d="M3.300 7.300l2.600 2.700 4.500-5.700" fill="none" stroke="#f6ecf6" stroke-width="2.100"/></svg><div class="t" style="left:427.700px">Zatwierdzony</div><div class="t" style="left:608px">PLN</div><div class="t num" style="left:644px;width:70px;text-align:right">1,000000</div><div class="t num" style="left:718px;width:80px;text-align:right">12,35</div>
<div class="t" style="left:1672px;top:2px;font-weight:bold;letter-spacing:0.250px;color:#1a1f3a">...</div>
</div>
<div class="row w" style="left:10px;top:414px">
<div class="t" style="left:2px;letter-spacing:-0.08px">PW 00341/PR/2020</div><div class="t" style="left:112px">11.08.2020</div><div class="t uc" style="left:250px">!NIEOKREŚLONY</div><svg class="ic" style="left:409px;top:1.700px" width="14" height="14" viewBox="0 0 14 14"><circle cx="7" cy="7" r="6.500" fill="url(#gChk)" stroke="#0f8f22" stroke-width="0.700"/><path d="M3.300 7.300l2.600 2.700 4.500-5.700" fill="none" stroke="#f6ecf6" stroke-width="2.100"/></svg><div class="t" style="left:427.700px">Zatwierdzony</div><div class="t" style="left:608px">PLN</div><div class="t num" style="left:644px;width:70px;text-align:right">1,000000</div><div class="t num" style="left:718px;width:80px;text-align:right">0,09</div>
<div class="t" style="left:1672px;top:2px;font-weight:bold;letter-spacing:0.250px;color:#1a1f3a">...</div>
</div>
</div>
<div class="abs" style="left:13px;top:212px;width:1686px;height:18px;border:1px dotted #222;border-left:none"></div>
<div class="abs" style="left:6px;top:199px;width:0;height:0;border-top:4px solid transparent;border-bottom:4px solid transparent;border-left:4px solid #9aa2b2"></div>
<div class="abs" style="left:6px;top:217px;width:0;height:0;border-top:4px solid transparent;border-bottom:4px solid transparent;border-left:4px solid #111"></div>
<div class="abs" style="left:2px;top:600px;width:1697px;height:1px;background:#a9b4c8"></div>
<div class="abs" style="left:2px;top:601px;width:1697px;height:32px;background:linear-gradient(#eceff4 0,#e3e7ef 30%,#d9dee8 100%)"></div>
<div class="abs" style="left:16px;top:606px;width:105px;height:24px;background:#fff;border:1px solid #ced4df;border-radius:2px"></div>
<div class="t" style="left:25px;top:610px">693 pozycji</div>
<div class="abs" style="left:732px;top:606px;width:80px;height:24px;background:#fff;border:1px solid #d5dae4;border-radius:2px"></div>
<div class="t" style="left:732px;top:610px;width:74px;text-align:right">416908 935,0</div>
<div class="abs" style="left:1681px;top:606px;width:15px;height:24px;background:#fff;border:1px solid #d5dae4;border-radius:2px"></div>
<div class="abs" style="left:1688px;top:616px;width:1px;height:2px;background:#c44"></div>
<div class="abs" style="left:852px;top:635px;width:14px;height:1.500px;background:repeating-linear-gradient(90deg,#6a7488 0,#6a7488 2px,transparent 2px,transparent 3.800px)"></div>
<div class="abs" style="left:4px;top:665px;width:1710px;height:5px;background:#fde7a2;border-top:1px solid #a9b3c6"></div>
<div class="abs" style="left:5px;top:640px;width:101px;height:28px;border:1px solid #c9c3a5;border-bottom:none;border-radius:2px 2px 0 0;background:linear-gradient(#fffdf5 0,#fff4d6 50%,#fee9a8 64%,#fde7a2 100%)"></div>
<div class="abs" style="left:6px;top:663px;width:99px;height:5px;background:#fde7a2"></div>
<svg class="ic" style="left:15px;top:646px" width="16" height="16" viewBox="0 0 16 16"><rect x="1.500" y="1.500" width="12" height="12" fill="#f4f7fc" stroke="#7f8db0" stroke-width="1"/><path d="M4.500 3v8.500h3.500" stroke="#4a5a86" stroke-width="1.200" fill="none"/><path d="M3 4h1.500M3 6h1.500M3 8h1.500" stroke="#4a5a86" stroke-width="0.700"/><circle cx="11.500" cy="12" r="3.300" fill="none" stroke="#50608c" stroke-width="1.400" stroke-dasharray="1.300 1.290"/><circle cx="11.500" cy="12" r="2.400" fill="#e6ebf5" stroke="#50608c" stroke-width="1"/><circle cx="11.500" cy="12" r="0.900" fill="#50608c"/></svg>
<div class="t" style="left:36px;top:647px;color:#1e2440">Specyfikacja</div>
<div class="abs" style="left:107px;top:641px;width:66px;height:25px;border:1px solid #97a5bd;border-bottom:none;border-radius:2px 2px 0 0;background:linear-gradient(#e9ecf3 0,#dfe4ed 48%,#d2d9e5 54%,#ccd4e2 100%)"></div>
<svg class="ic" style="left:115.5px;top:646px" width="16" height="16" viewBox="0 0 16 16"><rect x="0" y="2" width="14" height="10" fill="#eef1f7"/><rect x="1" y="3" width="1.500" height="8" fill="#222"/><rect x="3.500" y="3" width="2" height="6" fill="#222"/><rect x="6.500" y="3" width="2" height="6" fill="#222"/><rect x="9.500" y="3" width="1" height="8" fill="#222"/><rect x="11.500" y="3" width="1.500" height="8" fill="#222"/></svg>
<div class="t" style="left:136.5px;top:647px;color:#1e2440">Partie</div>
<div class="abs" style="left:174px;top:641px;width:147px;height:25px;border:1px solid #97a5bd;border-bottom:none;border-radius:2px 2px 0 0;background:linear-gradient(#e9ecf3 0,#dfe4ed 48%,#d2d9e5 54%,#ccd4e2 100%)"></div>
<svg class="ic" style="left:183px;top:646px" width="16" height="16" viewBox="0 0 16 16"><path d="M1.500 3.500h5l1.500 2h6v8h-12.500z" fill="#f0b24a" stroke="#b97a1c" stroke-width="0.8"/><rect x="4" y="1.500" width="8" height="7" fill="#fdfdff" stroke="#98a3c0" stroke-width="0.7"/><path d="M5 3.500h6M5 5.500h6" stroke="#9aa5c0" stroke-width="0.7"/><path d="M1.500 13.500l2-6h12l-2 6z" fill="#f8c668" stroke="#b97a1c" stroke-width="0.8"/></svg>
<div class="t" style="left:204px;top:647px;color:#1e2440">Dokumenty powiązane</div>
<div class="abs" style="left:322px;top:641px;width:87px;height:25px;border:1px solid #97a5bd;border-bottom:none;border-radius:2px 2px 0 0;background:linear-gradient(#e9ecf3 0,#dfe4ed 48%,#d2d9e5 54%,#ccd4e2 100%)"></div>
<svg class="ic" style="left:330.5px;top:646px" width="16" height="16" viewBox="0 0 16 16"><rect x="2.400" y="0.900" width="11.400" height="13.600" fill="#ffffff" stroke="#7585c8" stroke-width="1"/><path d="M2.500 6.200H5.500L7.500 4.200L9.500 7.200L11 5.500H13.700M2.500 8.800H5.500L7.500 6.800L9.500 9.800L11 8.100H13.700" fill="none" stroke="#cc2222" stroke-width="1.200"/></svg>
<div class="t" style="left:352.5px;top:647px;color:#1e2440">Adnotacje</div>
<div class="abs" style="left:411px;top:641px;width:133px;height:25px;border:1px solid #97a5bd;border-bottom:none;border-radius:2px 2px 0 0;background:linear-gradient(#e9ecf3 0,#dfe4ed 48%,#d2d9e5 54%,#ccd4e2 100%)"></div>
<svg class="ic" style="left:421px;top:646px" width="16" height="16" viewBox="0 0 16 16"><rect x="1.500" y="1.500" width="10" height="12" fill="#f4f6fb" stroke="#8793b4" stroke-width="0.9"/><circle cx="5.500" cy="5" r="1.800" fill="#4a5c8c"/><path d="M2.500 10c1-3 5-3 6 0z" fill="#4a5c8c"/><path d="M6 13l1-3 6-6 2 2-6 6z" fill="#e9a53a" stroke="#a86c14" stroke-width="0.6"/></svg>
<div class="t" style="left:442px;top:647px;color:#1e2440">Wymagane podpisy</div>
<div class="abs" style="left:546px;top:641px;width:85px;height:25px;border:1px solid #97a5bd;border-bottom:none;border-radius:2px 2px 0 0;background:linear-gradient(#e9ecf3 0,#dfe4ed 48%,#d2d9e5 54%,#ccd4e2 100%)"></div>
<svg class="ic" style="left:555px;top:646px" width="16" height="16" viewBox="0 0 16 16"><path d="M5 4v7a2.500 2.500 0 0 0 5 0V4a1.800 1.800 0 0 0-3.600 0v6.500" fill="none" stroke="#8c919c" stroke-width="1.500"/></svg>
<div class="t" style="left:576px;top:647px;color:#1e2440">Załączniki</div>
<div class="t" style="left:11px;top:677px">Cennik</div>
<div class="combo" style="left:60px;top:676px;width:248px;height:19px"></div>
<div class="t uc" style="left:62px;top:679px">PODSTAWOWY ( PLN Netto &nbsp;)</div><div class="arr" style="left:294px;top:684px"></div>
<div class="abs" style="left:36px;top:721px;width:1646px;height:226px;background:#fff"></div>
<div class="dh" style="left:36px;width:11px;border:none"></div>
<div class="t" style="left:37px;top:724px;font-size:10px;color:#222">❋</div>
<div class="dh" style="left:47px;width:37px"><span style="top:4px;left:1.4px">LP</span></div>
<div class="dh" style="left:84px;width:99px"><span style="top:4px;left:0.6px">Asortyment</span></div>
<div class="dh" style="left:183px;width:150px"><span style="top:4px;left:1.2px">Nazwa</span></div>
<div class="dh" style="left:333px;width:40px"><span style="top:4px;left:1.2px">Jm</span></div>
<div class="dh" style="left:373px;width:70px"><span style="top:4px;left:1.3px">Ilość</span></div>
<div class="dh" style="left:443px;width:71px"><span style="top:4px;left:1.1px">Cena zakupu</span></div>
<div class="dh" style="left:514px;width:80px"><span style="top:4px;left:0.6px">Wartość netto</span></div>
<div class="dh" style="left:594px;width:70px"><span style="top:4px;left:0.9px">Wartośc VAT</span></div>
<div class="dh" style="left:664px;width:79px"><span style="top:4px;left:0.7px">Wartość brutto</span></div>
<div class="dh" style="left:743px;width:70px"><span style="top:4px;left:1.5px">Cena sprz<i class="el">...</i></span></div>
<div class="dh" style="left:813px;width:64px"><span style="top:4px;left:1.3px">MPP - po<i class="el">...</i></span></div>
<div class="dh" style="left:877px;width:65px"><span style="top:4px;left:1.4px">Typ</span></div>
<div class="dh" style="left:942px;width:119px"><span style="top:4px;left:0.8px">Zestaw: kod</span></div>
<div class="dh" style="left:1061px;width:120px"><span style="top:4px;left:1.7px">Zestaw: nazwa</span></div>
<div class="dh" style="left:1181px;width:90px"><span style="top:4px;left:1.6px">Zestaw: ilość</span></div>
<div class="dh" style="left:1271px;width:81px"><span style="top:4px;left:1.3px">Ilość spakow<i class="el">...</i></span></div>
<div class="abs" style="left:68px;top:727px;width:0;height:0;border-left:4.500px solid transparent;border-right:4.500px solid transparent;border-bottom:5px solid #9aa3b5"></div>
<div class="abs" style="left:36px;top:740px;width:11px;height:59px;background:#e3e7ee"></div>
<div class="abs" style="left:47px;top:740px;width:1305px;height:19px;background:#edf6ee"></div>
<div class="abs" style="left:47px;top:759px;width:1305px;height:2px;background:#aeb9cc"></div>
<svg class="ic" style="left:38.300px;top:746.500px" width="7" height="9" viewBox="0 0 7 9"><ellipse cx="3.100" cy="2.300" rx="2.500" ry="2.200" fill="#111"/><circle cx="2.700" cy="1.900" r="0.700" fill="#fff"/><path d="M3.100 4v3.600" stroke="#111" stroke-width="1.300"/></svg>
<div class="t" style="left:650px;top:743px;color:#5a6072;width:100px;text-align:center">kliknij aby dodać filtr</div>
<div class="abs w" style="left:47px;top:761px;width:1305px;height:19px">
<div class="t" style="left:0px;top:3px;width:35px;text-align:right">1</div>
<div class="t" style="left:38.5px;top:3px">Silnik elektryczny</div>
<div class="t" style="left:137.5px;top:3px">Silnik elektryczny</div>
<div class="t" style="left:287.5px;top:3px">szt</div>
<div class="t" style="left:326px;top:3px;width:68.5px;text-align:right">1</div>
<div class="t" style="left:396px;top:3px;width:68.29999999999995px;text-align:right">5 000</div>
<div class="t" style="left:467px;top:3px;width:77.39999999999998px;text-align:right">5 000,00</div>
<div class="t" style="left:547px;top:3px;width:67.29999999999995px;text-align:right">1 150,00</div>
<div class="t" style="left:617px;top:3px;width:77.29999999999995px;text-align:right">6 150,00</div>
<div class="t" style="left:697px;top:3px;width:67.20000000000005px;text-align:right">800,00</div>
<div class="abs" style="left:791px;top:2px;width:15px;height:15px;border:1px solid #b9c0ce;border-radius:1px;box-shadow:inset 0 0 0 1px #f4f5f9;background:linear-gradient(#eef0f6 0,#e6e9f1 48%,#d4d9e6 54%,#dde1eb 100%)"></div>
<svg class="ic" style="left:836px;top:2px" width="13" height="14" viewBox="0 0 13 14"><rect x="0.500" y="0.500" width="12" height="13" rx="1.500" fill="#16357a"/><rect x="2.800" y="1.600" width="8.700" height="10.800" fill="url(#gBook)"/><rect x="1.300" y="1.600" width="1.200" height="10.800" fill="#e6eefb"/></svg>
<div class="t" style="left:853px;top:3px">Składnik</div>
<div class="t" style="left:1134px;top:3px;width:88px;text-align:right">0</div>
<div class="t" style="left:1224px;top:3px;width:79px;text-align:right">0</div>
</div>
<div class="abs g" style="left:47px;top:780px;width:1305px;height:19px">
<div class="t" style="left:0px;top:3px;width:35px;text-align:right">2</div>
<div class="t" style="left:38.5px;top:3px">Rury hydrauliczn<i class="el">...</i></div>
<div class="t" style="left:137.5px;top:3px">Rury hydrauliczne f100</div>
<div class="t" style="left:287.5px;top:3px">m</div>
<div class="t" style="left:326px;top:3px;width:68.5px;text-align:right">0,8</div>
<div class="t" style="left:396px;top:3px;width:68.29999999999995px;text-align:right">1 500</div>
<div class="t" style="left:467px;top:3px;width:77.39999999999998px;text-align:right">1 200,00</div>
<div class="t" style="left:547px;top:3px;width:67.29999999999995px;text-align:right">276,00</div>
<div class="t" style="left:617px;top:3px;width:77.29999999999995px;text-align:right">1 476,00</div>
<div class="t" style="left:697px;top:3px;width:67.20000000000005px;text-align:right">11,00</div>
<div class="abs" style="left:791px;top:2px;width:15px;height:15px;border:1px solid #b9c0ce;border-radius:1px;box-shadow:inset 0 0 0 1px #f4f5f9;background:linear-gradient(#eef0f6 0,#e6e9f1 48%,#d4d9e6 54%,#dde1eb 100%)"></div>
<svg class="ic" style="left:836px;top:2px" width="13" height="14" viewBox="0 0 13 14"><rect x="0.500" y="0.500" width="12" height="13" rx="1.500" fill="#16357a"/><rect x="2.800" y="1.600" width="8.700" height="10.800" fill="url(#gBook)"/><rect x="1.300" y="1.600" width="1.200" height="10.800" fill="#e6eefb"/></svg>
<div class="t" style="left:853px;top:3px">Składnik</div>
<div class="t" style="left:1134px;top:3px;width:88px;text-align:right">0</div>
<div class="t" style="left:1224px;top:3px;width:79px;text-align:right">0</div>
</div>
<div class="abs" style="left:40px;top:766px;width:0;height:0;border-top:4px solid transparent;border-bottom:4px solid transparent;border-left:4px solid #111"></div>
<svg class="ic" style="left:11px;top:727px" width="16" height="16" viewBox="0 0 16 16"><path d="M0.800 7L5.500 1.600H11.500V13Q11.500 15.400 9 15.400H3Q0.800 15.400 0.800 13Z" fill="#ffffff" stroke="#b0b5c4" stroke-width="0.900"/><path d="M0.800 7H5.500V1.600Z" fill="#f3f4f8" stroke="#b0b5c4" stroke-width="0.700" stroke-linejoin="round"/><polygon points="12.700,2.700 15.300,5.300 8.300,12.300 5.700,9.700" fill="#3a8ae8" stroke="#2560b8" stroke-width="0.600"/><polygon points="12.700,2.700 15.300,5.300 14.200,6.400 11.600,3.800" fill="#3a3a44"/><polygon points="5.700,9.700 8.300,12.300 4.300,13.700" fill="#ead9b6"/><polygon points="5.200,11.500 6.500,12.800 4.300,13.700" fill="#30303a"/></svg>
<svg class="ic" style="left:11.500px;top:755px" width="16" height="16" viewBox="0 0 16 16"><path d="M4 4L12 12M12 4L4 12" stroke="url(#gDel)" stroke-width="4.200" stroke-linecap="round"/></svg>
<svg class="ic" style="left:12px;top:784px" width="15" height="14" viewBox="0 0 15 14"><rect x="0.500" y="1.500" width="14" height="11" rx="1" fill="#f4f6fb" stroke="#5c6ea8" stroke-width="1"/><path d="M3.500 4v6M5.500 4v6M7.500 4v6M9.500 4v6M11.500 4v6" stroke="#222" stroke-width="1"/></svg>
<svg class="ic" style="left:8.9px;top:814.5px" width="17" height="18" viewBox="0 0 17 18"><rect x="4.500" y="1" width="10.500" height="11" fill="#eef1fa" stroke="#8fa0dc" stroke-width="1"/><path d="M2 1V12M0.500 1h3M0.500 12h3M5.500 15.300H15.500M5.500 13.500v3.600M15.500 13.500v3.600" stroke="#141a48" stroke-width="1.400" fill="none"/></svg>
<svg class="ic" style="left:1690px;top:727px" width="16" height="15" viewBox="0 0 16 15"><path d="M7 2.500h7M7 7.500h7M7 12.500h7" stroke="#ffffff" stroke-width="2.800" stroke-linecap="round" opacity="0.85"/><path d="M6 2.500h8M6 7.500h8M6 12.500h8" stroke="#1e2440" stroke-width="1.200" stroke-linecap="round"/><circle cx="2.200" cy="2.5" r="1.700" fill="#cfe4fb" stroke="#2b62c8" stroke-width="1"/><circle cx="2.200" cy="7.5" r="1.700" fill="#cfe4fb" stroke="#2b62c8" stroke-width="1"/><circle cx="2.200" cy="12.5" r="1.700" fill="#cfe4fb" stroke="#2b62c8" stroke-width="1"/></svg>
<div class="abs" style="left:2px;top:947px;width:1714px;height:5px;background:#fde7a2;border-top:1px solid #a9b3c6;border-radius:0 0 3px 0"></div>
<div class="abs" style="left:852px;top:955px;width:14px;height:1.500px;background:repeating-linear-gradient(90deg,#6a7488 0,#6a7488 2px,transparent 2px,transparent 3.800px)"></div>
<div class="t" style="left:659px;top:960px;width:400px;text-align:center;letter-spacing:3px;color:#1e2440;font-size:11px">UKRYJ SZCZEGÓŁY <span style="letter-spacing:2.300px">[F8]</span></div>
<div class="abs" style="left:1px;top:977px;width:1716px;height:5px;background:#fde7a2;border-bottom:1px solid #a9b3c6;border-radius:0 0 3px 3px"></div>
<div class="abs" style="left:1715px;top:640px;width:1px;height:311px;background:#a9b4c8"></div>
<div class="abs" style="left:1717px;top:31px;width:1px;height:951px;background:#a3afc5"></div>
<div class="abs" style="left:0;top:982px;width:1718px;height:17px;background:linear-gradient(#f0f2f6 0,#e4e7ee 50%,#d9dde7 100%)"></div>
<div class="abs" style="left:390px;top:984px;width:1px;height:15px;background:#eef0f5"></div>
<div class="abs" style="left:983px;top:984px;width:1px;height:15px;background:#eef0f5"></div>
<div class="abs" style="left:1577px;top:984px;width:1px;height:15px;background:#eef0f5"></div>
<div class="t" style="left:395px;top:984px;color:#3a3f52;letter-spacing:0">Modus demo v.5.0.0.453</div>
<div class="t" style="left:988px;top:984px;color:#3a3f52">Nr licencji: 2223/111111111111111</div>
<div class="t" style="left:1500px;top:984px;width:213px;text-align:right;color:#3a3f52;letter-spacing:-0.08px">2024-09-23,&nbsp; 10:48:07</div>
<svg class="abs" style="left:0;top:0" width="1718" height="999" viewBox="0 0 1718 999"><defs><filter id="sh" x="-5%" y="-5%" width="110%" height="115%"><feGaussianBlur in="SourceAlpha" stdDeviation="3.500"/><feOffset dx="1" dy="2.500"/><feComponentTransfer><feFuncA type="linear" slope="0.46"/></feComponentTransfer><feMerge><feMergeNode/><feMergeNode in="SourceGraphic"/></feMerge></filter><radialGradient id="rg" cx="0.5" cy="0.35" r="0.7"><stop offset="0" stop-color="#dc2a30"/><stop offset="1" stop-color="#cf2026"/></radialGradient></defs>
<g filter="url(#sh)"><rect x="15.750" y="175.250" width="1676.500" height="430" rx="6" fill="none" stroke="#fe0000" stroke-width="4"/>
<rect x="0.750" y="638.500" width="1714.800" height="277.500" rx="6" fill="none" stroke="#fe0000" stroke-width="4"/>
<path d="M1277.500 69.600L1211.500 176" stroke="#f01418" stroke-width="1.500"/><circle cx="1211.500" cy="176" r="4.500" fill="#fe0000"/>
<path d="M1102 950L988.400 916" stroke="#f01418" stroke-width="1.500"/><circle cx="988.400" cy="916" r="4.500" fill="#fe0000"/>
<circle cx="1277.500" cy="69.600" r="14.200" fill="url(#rg)" stroke="#f22a2e" stroke-width="1.500"/><circle cx="1102" cy="950" r="14.200" fill="url(#rg)" stroke="#f22a2e" stroke-width="1.500"/></g>
<text x="1277.500" y="75" text-anchor="middle" font-family="Liberation Sans, sans-serif" font-size="15" fill="#fff">1</text><text x="1102" y="955.400" text-anchor="middle" font-family="Liberation Sans, sans-serif" font-size="15" fill="#fff">2</text>
</svg>
</body></html>
